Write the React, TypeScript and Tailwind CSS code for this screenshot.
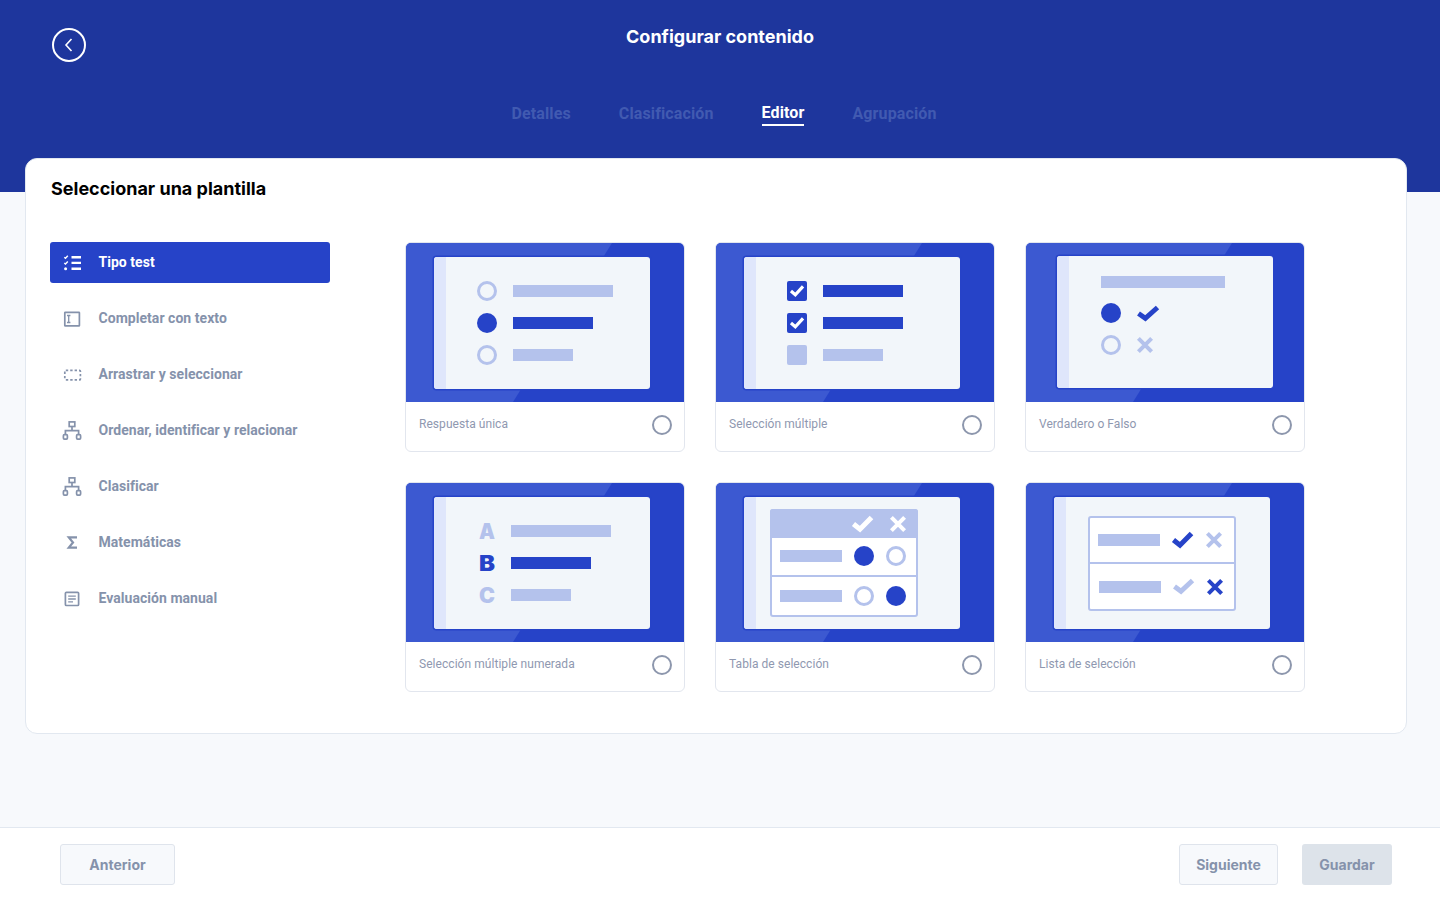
const BLUE = "#2643c8";
const SOFT = "#b4c2ec";

function Ring({ x, y }: { x: number; y: number }) {
  return <circle cx={x} cy={y} r={8.5} fill="none" stroke={SOFT} strokeWidth={3} />;
}

function Dot({ x, y }: { x: number; y: number }) {
  return <circle cx={x} cy={y} r={10} fill={BLUE} />;
}

function Bar({ x, y, w, on }: { x: number; y: number; w: number; on?: boolean }) {
  return <rect x={x} y={y} width={w} height={12} fill={on ? BLUE : SOFT} />;
}

// x,y,w,h is the box of the mark
function Check({ x, y, w, h, color, sw = 5 }: { x: number; y: number; w: number; h: number; color: string; sw?: number }) {
  const pad = sw * 0.5;
  return (
    <path
      d={`M${x + pad * 0.6} ${y + h * 0.5} L${x + w * 0.38} ${y + h - pad * 1.1} L${x + w - pad * 0.6} ${y + pad * 0.6}`}
      fill="none"
      stroke={color}
      strokeWidth={sw}
    />
  );
}

function Cross({ x, y, s, color, sw = 4 }: { x: number; y: number; s: number; color: string; sw?: number }) {
  const p = sw * 0.35;
  return (
    <path
      d={`M${x + p} ${y + p} L${x + s - p} ${y + s - p} M${x + s - p} ${y + p} L${x + p} ${y + s - p}`}
      fill="none"
      stroke={color}
      strokeWidth={sw}
    />
  );
}

function Thumb({ px = 28, py = 14, children }: { px?: number; py?: number; children: React.ReactNode }) {
  return (
    <svg width="278" height="159" viewBox="0 0 278 159" className="block">
      <rect width="278" height="159" fill={BLUE} />
      <polygon points="0,0 206,0 107,159 0,159" fill="#3c59d1" />
      <rect x={px - 1.5} y={py - 1.5} width="219" height="135" rx="4" fill={BLUE} />
      <rect x={px} y={py} width="216" height="132" rx="3" fill="#f2f6fa" />
      <path d={`M${px + 12} ${py} V${py + 132} H${px + 3} a3 3 0 0 1 -3 -3 V${py + 3} a3 3 0 0 1 3 -3 Z`} fill="#dfe6fb" />
      {children}
    </svg>
  );
}

function Letter({ y, on, children }: { y: number; on?: boolean; children: string }) {
  return (
    <text
      x="73"
      y={y}
      fontSize="21"
      fontWeight="900"
      fontFamily="Inter, sans-serif"
      fill={on ? BLUE : SOFT}
      textLength="16"
      lengthAdjust="spacingAndGlyphs"
    >
      {children}
    </text>
  );
}

const templates = [
  {
    label: "Respuesta única",
    art: (
      <Thumb>
        <Ring x={81} y={48} />
        <Dot x={81} y={80} />
        <Ring x={81} y={112} />
        <Bar x={107} y={42} w={100} />
        <Bar x={107} y={74} w={80} on />
        <Bar x={107} y={106} w={60} />
      </Thumb>
    ),
  },
  {
    label: "Selección múltiple",
    art: (
      <Thumb>
        <rect x="71" y="38" width="20" height="20" rx="2" fill={BLUE} />
        <Check x={74} y={42.5} w={14} h={11} color="#fff" sw={3.2} />
        <rect x="71" y="70" width="20" height="20" rx="2" fill={BLUE} />
        <Check x={74} y={74.5} w={14} h={11} color="#fff" sw={3.2} />
        <rect x="71" y="102" width="20" height="20" rx="2" fill={SOFT} />
        <Bar x={107} y={42} w={80} on />
        <Bar x={107} y={74} w={80} on />
        <Bar x={107} y={106} w={60} />
      </Thumb>
    ),
  },
  {
    label: "Verdadero o Falso",
    art: (
      <Thumb px={31} py={13}>
        <Bar x={75} y={33} w={124} />
        <Dot x={85} y={70} />
        <Check x={111} y={63} w={22} h={15} color={BLUE} />
        <Ring x={85} y={102} />
        <Cross x={111} y={94} s={16} color={SOFT} />
      </Thumb>
    ),
  },
  {
    label: "Selección múltiple numerada",
    art: (
      <Thumb>
        <Letter y={56}>A</Letter>
        <Letter y={88} on>
          B
        </Letter>
        <Letter y={120}>C</Letter>
        <Bar x={105} y={42} w={100} />
        <Bar x={105} y={74} w={80} on />
        <Bar x={105} y={106} w={60} />
      </Thumb>
    ),
  },
  {
    label: "Tabla de selección",
    art: (
      <Thumb>
        <rect x="55" y="27" width="146" height="106" rx="2" fill="#fff" stroke={SOFT} strokeWidth="2" />
        <path d="M54 55 V29 a3 3 0 0 1 3 -3 H199 a3 3 0 0 1 3 3 V55 Z" fill={SOFT} />
        <rect x="55" y="92" width="146" height="2" fill={SOFT} />
        <Check x={136} y={33} w={21} h={16} color="#fff" />
        <Cross x={174} y={33} s={16} color="#fff" />
        <Bar x={64} y={67} w={62} />
        <Bar x={64} y={107} w={62} />
        <Dot x={148} y={73} />
        <Ring x={180} y={73} />
        <Ring x={148} y={113} />
        <Dot x={180} y={113} />
      </Thumb>
    ),
  },
  {
    label: "Lista de selección",
    art: (
      <Thumb>
        <rect x="63" y="34" width="146" height="93" rx="2" fill="#fff" stroke={SOFT} strokeWidth="2" />
        <rect x="63" y="79" width="146" height="2" fill={SOFT} />
        <Bar x={72} y={51} w={62} />
        <Bar x={73} y={98} w={62} />
        <Check x={146} y={49} w={21} h={16} color={BLUE} />
        <Cross x={180} y={49} s={16} color={SOFT} />
        <Check x={147} y={96} w={21} h={15} color={SOFT} />
        <Cross x={181} y={96} s={16} color={BLUE} />
      </Thumb>
    ),
  },
];

function TreeIcon() {
  return (
    <svg width="20" height="20" viewBox="0 0 20 20" fill="none" stroke="currentColor" strokeWidth="1.7">
      <rect x="7.2" y="0.9" width="5.6" height="4.6" />
      <path d="M10 5.5 V9.7 M3.4 13.7 V9.7 H16.6 V13.7" />
      <rect x="1.4" y="13.7" width="4" height="4.4" rx="1" />
      <rect x="14.6" y="13.7" width="4" height="4.4" rx="1" />
    </svg>
  );
}

const menu = [
  {
    label: "Tipo test",
    icon: (
      <svg width="20" height="20" viewBox="0 0 20 20" fill="none" stroke="currentColor">
        <path d="M9.5 4.2 H19 M9.5 9.9 H19 M9.5 15.7 H19" strokeWidth="2.4" />
        <path d="M2.3 4.2 L3.5 5.3 L5.8 2.8 M2.3 9.9 L3.5 11 L5.8 8.5" strokeWidth="1.4" />
        <circle cx="3.6" cy="15.7" r="1.5" fill="currentColor" stroke="none" />
      </svg>
    ),
  },
  {
    label: "Completar con texto",
    icon: (
      <svg width="20" height="20" viewBox="0 0 20 20" fill="none" stroke="currentColor">
        <rect x="2.8" y="3.3" width="14.6" height="13.6" rx="0.5" strokeWidth="1.7" />
        <path d="M5 6.5 H8.4 M6.7 6.5 V13.5 M5 13.5 H8.4" strokeWidth="1.3" />
      </svg>
    ),
  },
  {
    label: "Arrastrar y seleccionar",
    icon: (
      <svg width="20" height="20" viewBox="0 0 20 20" fill="none" stroke="currentColor">
        <rect x="2.8" y="5.3" width="15.6" height="9.6" rx="1" strokeWidth="1.7" strokeDasharray="2.4 2" />
      </svg>
    ),
  },
  { label: "Ordenar, identificar y relacionar", icon: <TreeIcon /> },
  { label: "Clasificar", icon: <TreeIcon /> },
  {
    label: "Matemáticas",
    icon: (
      <svg width="20" height="20" viewBox="0 0 20 20" fill="none" stroke="currentColor" strokeWidth="2.2">
        <path d="M15 4.4 H6.8 L11 9.5 L6.8 14.6 H15" />
      </svg>
    ),
  },
  {
    label: "Evaluación manual",
    icon: (
      <svg width="20" height="20" viewBox="0 0 20 20" fill="none" stroke="currentColor" strokeWidth="1.7">
        <rect x="3.4" y="3.3" width="13.2" height="13.2" rx="1" />
        <path d="M6.2 7.2 H13.8 M6.2 10 H13.8 M6.2 12.8 H11" strokeWidth="1.3" />
      </svg>
    ),
  },
];

const tabs = ["Detalles", "Clasificación", "Editor", "Agrupación"];

export default function App() {
  return (
    <div className="h-[900px] flex flex-col overflow-hidden bg-[#f7f9fc] font-['Inter',sans-serif]">
      <header className="h-[192px] shrink-0 bg-[#1e369d] relative">
        <button className="absolute left-[52px] top-[28px] w-[34px] h-[34px] rounded-full border-2 border-white flex items-center justify-center text-white">
          <svg width="12" height="16" viewBox="0 0 12 16" fill="none" stroke="currentColor" strokeWidth="1.6">
            <path d="M8.5 2 L3 8 L8.5 14" />
          </svg>
        </button>
        <h1 className="pt-[23px] text-center text-lg leading-7 font-bold text-white">Configurar contenido</h1>
        <nav className="mt-[51px] pl-2 flex justify-center gap-12 font-['Roboto',sans-serif] text-base font-bold leading-6 tracking-[0.12px]">
          {tabs.map((tab) =>
            tab === "Editor" ? (
              <span key={tab} className="h-[25px] -mt-px border-b-2 border-white text-white">
                {tab}
              </span>
            ) : (
              <span key={tab} className="text-[#415ab1]">
                {tab}
              </span>
            )
          )}
        </nav>
      </header>

      <main className="mt-[-34px] ml-[25px] w-[1382px] h-[576px] shrink-0 relative rounded-xl border border-[#e2e8f0] bg-white pl-6 pt-4">
        <h2 className="ml-px text-lg leading-7 font-bold text-black">Seleccionar una plantilla</h2>
        <div className="mt-[39px] flex items-start gap-[75px]">
          <ul className="w-[280px] flex flex-col gap-[15px] font-['Roboto',sans-serif] text-sm font-bold tracking-[0.04px]">
            {menu.map((item, i) => (
              <li
                key={item.label}
                className={
                  i === 0
                    ? "h-[41px] flex items-center gap-[16.5px] pl-3 rounded-[3px] bg-[#2643c8] text-white"
                    : "h-[41px] flex items-center gap-[16.5px] pl-3 text-[#8592ab]"
                }
              >
                {item.icon}
                <span className="-mt-0.5">{item.label}</span>
              </li>
            ))}
          </ul>
          <div className="grid grid-cols-[280px_280px_280px] gap-[30px]">
            {templates.map((t) => (
              <div key={t.label} className="h-[210px] rounded-md border border-[#e2e6ee] bg-white overflow-hidden">
                {t.art}
                <div className="h-[49px] flex items-center justify-between pb-1 pl-[13px] pr-3 font-['Roboto',sans-serif] text-xs tracking-[0.05px] text-[#8f98b0]">
                  <span className="-mt-0.5">{t.label}</span>
                  <span className="w-5 h-5 rounded-full border-2 border-[#8d97ad]" />
                </div>
              </div>
            ))}
          </div>
        </div>
      </main>

      <footer className="mt-auto h-[73px] shrink-0 border-t border-[#e2e8f0] bg-white flex items-start justify-between pt-4 pl-[60px] pr-12 text-sm font-bold text-[#8592ab]">
        <button className="w-[115px] h-[41px] rounded-[3px] border border-[#dfe4ec] bg-[#f7f9fc]">Anterior</button>
        <div className="flex gap-6">
          <button className="w-[99px] h-[41px] rounded-[3px] border border-[#dfe4ec] bg-[#f7f9fc]">Siguiente</button>
          <button className="w-[90px] h-[41px] rounded-[3px] bg-[#dde3ea]">Guardar</button>
        </div>
      </footer>
    </div>
  );
}
